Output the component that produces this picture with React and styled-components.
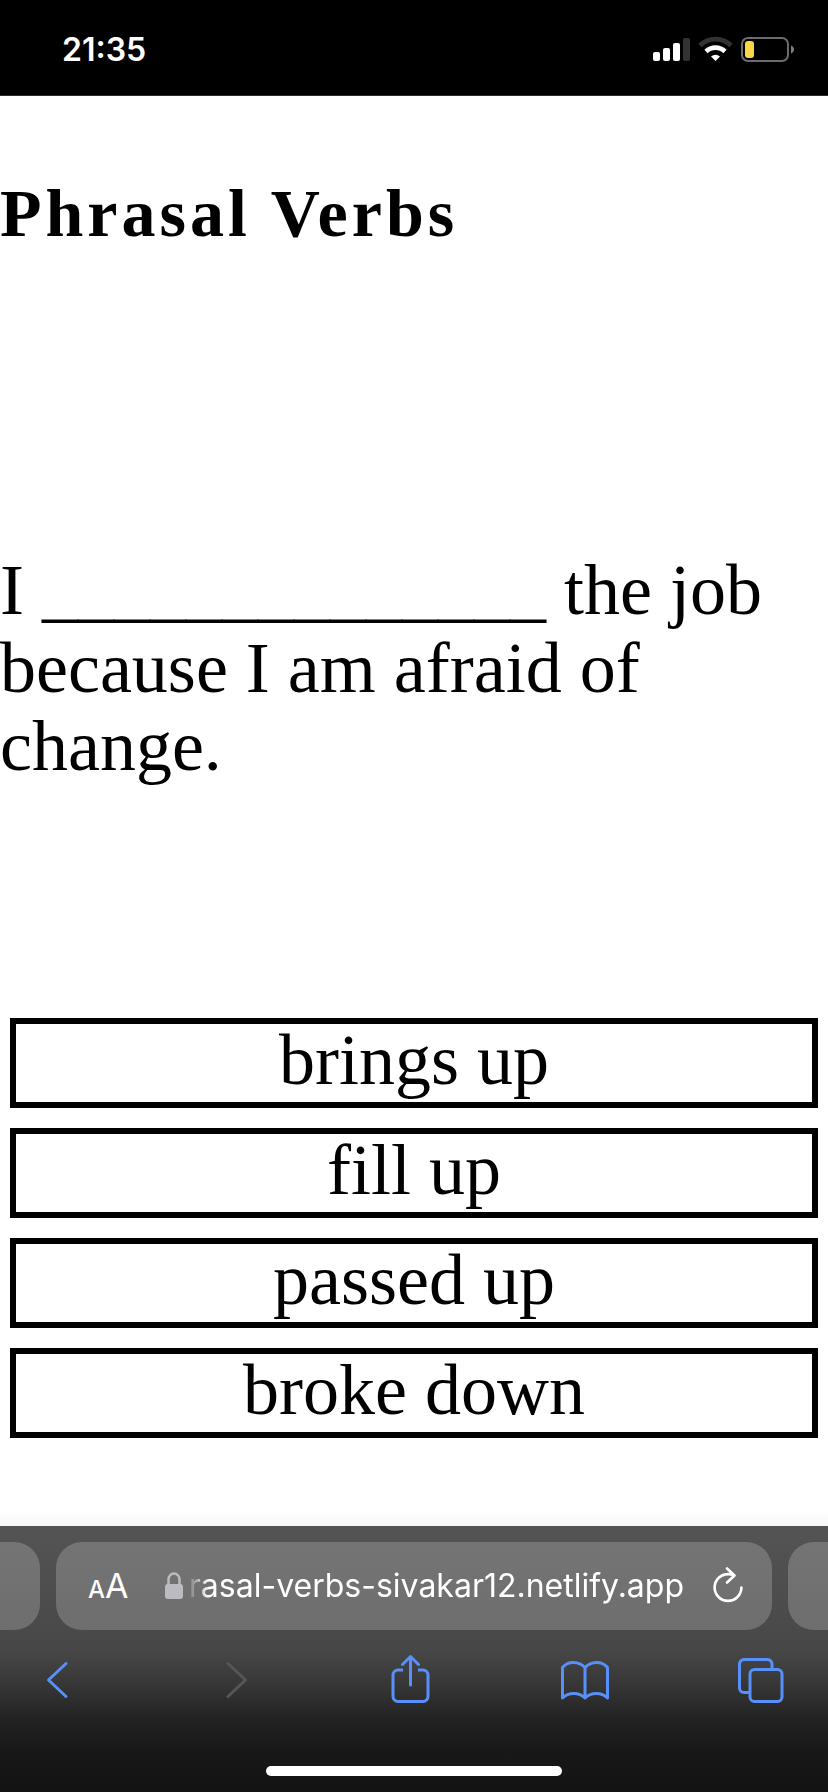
import React, { useState } from "react";
import styled, { createGlobalStyle } from "styled-components";

const GlobalStyle = createGlobalStyle`
  *, *::before, *::after { box-sizing: border-box; }
  body { margin: 0; background: #fff; }
  button { margin: 0; padding: 0; border: 0; background: none; color: inherit; font: inherit; cursor: pointer; }
  svg { display: block; flex: none; }
`;

const serif = `"Liberation Serif", serif`;
const sans = `Inter, sans-serif`;

const Page = styled.div`
  display: flex;
  flex-direction: column;
  min-height: 100vh;
`;

const StatusBar = styled.header`
  display: flex;
  align-items: center;
  justify-content: space-between;
  height: 96px;
  padding: 4px 34px 0 62px;
  background: #000;
  border-bottom: 1px solid #2e2c2e;
  color: #fff;
  font-family: ${sans};
`;

const Clock = styled.time`
  font-size: 32px;
  font-weight: 600;
  line-height: 40px;
`;

const Quiz = styled.main`
  display: flex;
  flex: 1;
  flex-direction: column;
  padding-top: 77px;
  background: linear-gradient(to top, #f7f7f7, #fff 16px);
  color: #000;
  font-family: ${serif};
`;

const Title = styled.h1`
  margin: 0 0 298px;
  font-size: 68px;
  font-weight: 700;
  line-height: 80px;
  letter-spacing: 4px;
`;

const Sentence = styled.p`
  margin: 0 0 233px;
  font-size: 72px;
  line-height: 78px;
`;

const Answers = styled.ul`
  display: grid;
  gap: 20px;
  margin: 0;
  padding: 0 10px 88px;
  list-style: none;
`;

const Answer = styled.button`
  display: block;
  width: 100%;
  padding-bottom: 6px;
  border: 6px solid #000;
  background: ${(p) => (p.$chosen ? "#eee" : "#fff")};
  font-size: 72px;
  line-height: 72px;
  text-align: center;
`;

const BrowserBar = styled.footer`
  display: flex;
  flex-direction: column;
  height: 266px;
  padding-top: 16px;
  background: linear-gradient(#545454, #4a4a4a 100px, #464646 128px, #393939 154px, #222 194px, #181818 226px, #131313);
  font-family: ${sans};
`;

const TabStrip = styled.div`
  display: flex;
  gap: 16px;
  height: 88px;
`;

const NeighbourTab = styled.div`
  width: 40px;
  border-radius: ${(p) => (p.$side === "left" ? "0 26px 26px 0" : "26px 0 0 26px")};
  background: rgba(255, 255, 255, 0.2);
`;

const AddressBar = styled.div`
  display: flex;
  flex: 1;
  align-items: center;
  gap: 28px;
  min-width: 0;
  padding: 0 28px 0 32px;
  border-radius: 26px;
  background: rgba(255, 255, 255, 0.2);
  color: #fff;
`;

const TextSize = styled.button`
  display: flex;
  align-items: baseline;
  padding-top: 4px;
  font-size: 34px;
  line-height: 40px;
`;

const SmallLetter = styled.span`
  font-size: 24px;
  font-weight: 500;
`;

const Address = styled.button`
  display: flex;
  flex: 1;
  align-items: center;
  justify-content: flex-end;
  gap: 6px;
  font-size: 32px;
  line-height: 40px;
  white-space: nowrap;
`;

const Url = styled.span`
  mask-image: linear-gradient(to right, rgba(0, 0, 0, 0.1), #000 20px);
`;

const Toolbar = styled.nav`
  display: flex;
  justify-content: space-between;
  padding: 22px 39px 0 29px;
  color: #5890fa;
`;

const ToolButton = styled.button`
  width: 56px;
  height: 56px;

  &:disabled { color: #565656; cursor: default; }
`;

const HomeIndicator = styled.div`
  width: 296px;
  height: 10px;
  margin: auto auto 16px;
  border-radius: 5px;
  background: #fff;
`;

const StatusIcons = () => (
  <svg width="142" height="28" viewBox="0 0 142 28" fill="none" role="img" aria-label="Signal, Wi-Fi and battery">
    <g fill="#fff">
      <rect x="1" y="16" width="7" height="9" rx="2" />
      <rect x="11" y="12" width="7" height="13" rx="2" />
      <rect x="21" y="7" width="7" height="18" rx="2" />
      <rect x="31" y="2" width="7" height="23" rx="2" fill="#333" />
    </g>
    <path d="M48 9.500a22 22 0 0 1 31 0" stroke="#333" strokeWidth="4.600" />
    <path d="M54 15.500a13.500 13.500 0 0 1 19 0" stroke="#fff" strokeWidth="4.600" />
    <path d="M59 20.500a7 7 0 0 1 9 0L63.500 25z" fill="#fff" />
    <rect x="90" y="2" width="46" height="23" rx="6" stroke="#6b6b6b" strokeWidth="2" />
    <rect x="93" y="5" width="9" height="17" rx="3" fill="#f8d748" />
    <path d="M139 9.500c4 1.500 4 6.500 0 8z" fill="#808080" />
  </svg>
);

const LockIcon = () => (
  <svg width="18" height="28" viewBox="0 0 18 28" fill="none" aria-hidden="true">
    <path d="M3.500 13V7.500a5.500 6 0 0 1 11 0V13" stroke="#bdbbc2" strokeWidth="2.500" />
    <rect y="12" width="18" height="15" rx="3" fill="#bdbbc2" />
  </svg>
);

const ReloadIcon = () => (
  <svg width="32" height="40" viewBox="0 0 32 40" fill="none" stroke="currentColor" strokeWidth="2.600" strokeLinecap="round" strokeLinejoin="round" aria-hidden="true">
    <path d="M29.400 21.500a13.400 13.400 0 1 1-13.400-13.400c2.400 0 4.300.4 6.500 1.200M15 2.500l7.500 7-7.500 7" />
  </svg>
);

const ToolIcon = ({ children }) => (
  <svg width="56" height="56" viewBox="0 0 56 56" fill="none" stroke="currentColor" strokeWidth="3" strokeLinecap="round" strokeLinejoin="round" aria-hidden="true">
    {children}
  </svg>
);

const TOOLS = [
  { name: "Back", icon: <path d="M37 11.500 19.500 28 37 44.500" /> },
  { name: "Forward", disabled: true, icon: <path d="M23 11.500 40.500 28 23 44.500" /> },
  {
    name: "Share",
    icon: (
      <>
        <path d="M22 18h-5a5 5 0 0 0-5 5v21.500a5 5 0 0 0 5 5h25a5 5 0 0 0 5-5V23a5 5 0 0 0-5-5h-5" strokeLinecap="butt" />
        <path d="M29.500 33V5M21.500 12.500l8-8 8 8" />
      </>
    ),
  },
  {
    name: "Bookmarks",
    icon: (
      <path d="M28 15.500C22 9 11 8.500 5.500 15.500V46c6-6 16.500-6 22.500 0 6-6 16.500-6 22.500 0V15.500C45 8.500 34 9 28 15.500V46" />
    ),
  },
  {
    name: "Tabs",
    icon: (
      <>
        <path d="M17 40.500h-6a4.500 4.500 0 0 1-4.500-4.500V12A4.500 4.500 0 0 1 11 7.500h23.500A4.500 4.500 0 0 1 39 12v6" strokeLinecap="butt" />
        <rect x="17" y="17.500" width="32" height="32" rx="4.500" />
      </>
    ),
  },
];

const ANSWERS = ["brings up", "fill up", "passed up", "broke down"];

export default function App() {
  const [chosen, setChosen] = useState(null);

  return (
    <>
      <GlobalStyle />
      <Page>
        <StatusBar>
          <Clock>21:35</Clock>
          <StatusIcons />
        </StatusBar>
        <Quiz>
          <Title>Phrasal Verbs</Title>
          <Sentence>I ______________ the job because I am afraid of change.</Sentence>
          <Answers>
            {ANSWERS.map((answer) => (
              <li key={answer}>
                <Answer type="button" $chosen={chosen === answer} onClick={() => setChosen(answer)}>
                  {answer}
                </Answer>
              </li>
            ))}
          </Answers>
        </Quiz>
        <BrowserBar>
          <TabStrip>
            <NeighbourTab $side="left" />
            <AddressBar>
              <TextSize type="button" aria-label="Text size">
                <SmallLetter>A</SmallLetter>A
              </TextSize>
              <Address type="button">
                <LockIcon />
                <Url>rasal-verbs-sivakar12.netlify.app</Url>
              </Address>
              <button type="button" aria-label="Reload">
                <ReloadIcon />
              </button>
            </AddressBar>
            <NeighbourTab $side="right" />
          </TabStrip>
          <Toolbar aria-label="Browser">
            {TOOLS.map(({ name, disabled, icon }) => (
              <ToolButton key={name} type="button" aria-label={name} disabled={disabled}>
                <ToolIcon>{icon}</ToolIcon>
              </ToolButton>
            ))}
          </Toolbar>
          <HomeIndicator />
        </BrowserBar>
      </Page>
    </>
  );
}
